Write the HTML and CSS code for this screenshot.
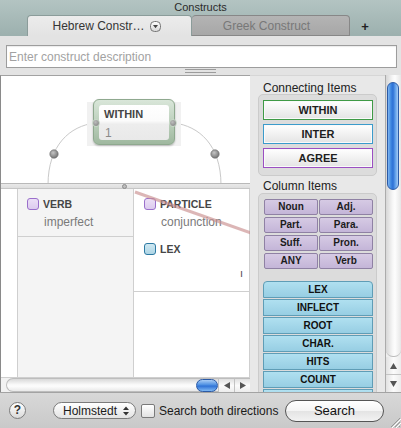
FILE: index.html
```
<!DOCTYPE html>
<html>
<head>
<meta charset="utf-8">
<link rel="stylesheet" href="styles.css">
</head>
<body>
<div class="win">
  <div class="titlebar">
    <div class="title">Constructs</div>
    <div class="tabs">
      <div class="tab tab-active">
        <span>Hebrew Constr…</span>
        <svg class="tabmenu" width="11" height="11" viewBox="0 0 11 11">
          <defs><linearGradient id="tm" x1="0" y1="0" x2="0" y2="1"><stop offset="0" stop-color="#fff"/><stop offset="1" stop-color="#d6d6d6"/></linearGradient></defs>
          <rect x="0.5" y="0.5" width="10" height="10" rx="4" fill="url(#tm)" stroke="#777"/>
          <path d="M3 4h5l-2.5 3.3z" fill="#444"/>
        </svg>
      </div>
      <div class="tab tab-inactive">Greek Construct</div>
      <div class="tab-add">+</div>
    </div>
  </div>

  <div class="toolbar">
    <input class="desc" type="text" placeholder="Enter construct description">
    <div class="grip"></div>
  </div>

  <div class="main">
    <div class="leftpane">
      <div class="canvas">
        <svg class="arcs" width="249" height="107" viewBox="0 0 249 107">
          <defs>
            <radialGradient id="dot" cx="0.4" cy="0.35" r="0.7"><stop offset="0" stop-color="#c4c4c4"/><stop offset="1" stop-color="#6f6f6f"/></radialGradient>
          </defs>
          <path d="M94 47 C69 50 47 69 47 109" fill="none" stroke="#c9c9c9" stroke-width="1"/>
          <path d="M173 47 C198 50 220 69 220 109" fill="none" stroke="#c9c9c9" stroke-width="1"/>
          <circle cx="53" cy="78" r="4.2" fill="url(#dot)" stroke="#6a6a6a" stroke-width="0.6"/>
          <circle cx="214" cy="78" r="4.2" fill="url(#dot)" stroke="#6a6a6a" stroke-width="0.6"/>
        </svg>
        <div class="node-shadow"></div>
        <div class="node">
          <div class="node-inner">
            <div class="node-title">WITHIN</div>
            <div class="node-num">1</div>
          </div>
          <span class="conn conn-l"></span>
          <span class="conn conn-r"></span>
        </div>
      </div>
      <div class="splitter"><span class="knob"></span></div>
      <div class="grid">
        <div class="col gutter"></div>
        <div class="col c1">
          <div class="cell cell-verb">
            <div class="item-head"><span class="chk chk-purple"></span><span class="item-name">VERB</span></div>
            <div class="item-sub">imperfect</div>
          </div>
        </div>
        <div class="col c2">
          <div class="cell cell-particle">
            <div class="item-head"><span class="chk chk-purple"></span><span class="item-name">PARTICLE</span></div>
            <div class="item-sub">conjunction</div>
            <div class="item-head lex"><span class="chk chk-blue"></span><span class="item-name">LEX</span></div>
            <div class="item-value">ו</div>
          </div>
        </div>
        <svg class="link" width="249" height="188" viewBox="0 0 249 188">
          <line x1="134" y1="3" x2="250" y2="44" stroke="#c98f8f" stroke-width="3" stroke-opacity="0.65"/>
        </svg>
      </div>
      <div class="hscroll">
        <div class="htrack"><span class="hthumb"></span></div>
        <div class="harrow"><svg width="6" height="7" viewBox="0 0 6 7"><path d="M6 0v7L0 3.5z" fill="#555"/></svg></div>
        <div class="harrow harrow-r"><svg width="6" height="7" viewBox="0 0 6 7"><path d="M0 0v7l6-3.5z" fill="#555"/></svg></div>
      </div>
    </div>

    <div class="palette">
      <div class="plabel">Connecting Items</div>
      <div class="pbox">
        <div class="cbtn cbtn-green">WITHIN</div>
        <div class="cbtn cbtn-blue">INTER</div>
        <div class="cbtn cbtn-purple">AGREE</div>
      </div>
      <div class="plabel plabel2">Column Items</div>
      <div class="pbox pbox2">
        <div class="pgrid">
          <div class="pbtn">Noun</div><div class="pbtn">Adj.</div>
          <div class="pbtn">Part.</div><div class="pbtn">Para.</div>
          <div class="pbtn">Suff.</div><div class="pbtn">Pron.</div>
          <div class="pbtn">ANY</div><div class="pbtn">Verb</div>
        </div>
        <div class="blist">
          <div class="bbtn bbtn-first">LEX</div>
          <div class="bbtn">INFLECT</div>
          <div class="bbtn">ROOT</div>
          <div class="bbtn">CHAR.</div>
          <div class="bbtn">HITS</div>
          <div class="bbtn">COUNT</div>
          <div class="bbtn">&nbsp;</div>
        </div>
      </div>
    </div>

    <div class="vscroll">
      <div class="vtrack"><span class="vthumb"></span></div>
      <div class="varrow"><svg width="7" height="6" viewBox="0 0 7 6"><path d="M0 6h7L3.5 0z" fill="#555"/></svg></div>
      <div class="varrow varrow-d"><svg width="7" height="6" viewBox="0 0 7 6"><path d="M0 0h7L3.5 6z" fill="#555"/></svg></div>
    </div>
  </div>

  <div class="bottombar">
    <div class="help">?</div>
    <div class="popup"><span>Holmstedt</span>
      <svg width="6" height="10" viewBox="0 0 6 10"><path d="M0 4L3 0.5L6 4z M0 6L3 9.5L6 6z" fill="#333"/></svg>
    </div>
    <span class="checkbox"></span>
    <span class="chklabel">Search both directions</span>
    <div class="search">Search</div>
    <svg class="resize" width="12" height="12" viewBox="0 0 12 12">
      <path d="M11 2L2 11M11 6L6 11M11 10L10 11" stroke="#999" stroke-width="1"/>
      <path d="M12 3L3 12M12 7L7 12" stroke="#fff" stroke-width="1"/>
    </svg>
  </div>
</div>
</body>
</html>
```
FILE: styles.css
```
* { box-sizing: border-box; }
html, body { margin: 0; padding: 0; }
body {
  width: 401px;
  height: 428px;
  overflow: hidden;
  font-family: "Liberation Sans", Arial, sans-serif;
  background: #d0d0d0;
}
.win { width: 401px; height: 428px; display: flex; flex-direction: column; }

/* title + tabs */
.titlebar {
  height: 36px;
  background: linear-gradient(#b3c4c2, #9cb0ae);
  display: flex;
  flex-direction: column;
}
.title { height: 15px; line-height: 15px; text-align: center; font-size: 11px; color: #2b2b2b; }
.tabs { height: 21px; display: flex; padding-left: 27px; }
.tab {
  display: flex; align-items: center; justify-content: center; gap: 5px;
  font-size: 12px; border-radius: 4px 4px 0 0;
}
.tab-active {
  width: 165px;
  background: linear-gradient(#ececec, #e3e3e3);
  color: #353535;
  border: 1px solid #8b9c9a;
  border-bottom: none;
  padding-right: 6px;
}
.tabmenu { display: block; }
.tab-inactive {
  width: 158px;
  background: linear-gradient(#b4b4b4, #a7a7a7);
  color: #787878;
  border: 1px solid #878787;
  border-left: none;
  padding-right: 8px;
}
.tab-add {
  width: 30px; display: flex; align-items: center; justify-content: center;
  font-size: 13px; font-weight: bold; color: #222; padding-top: 1px;
}

/* toolbar */
.toolbar {
  height: 39px;
  background: #e3e3e3;
  padding: 9px 4px 0 6px;
}
.desc {
  display: block;
  width: 391px; height: 23px;
  border: 1px solid #9d9d9d;
  box-shadow: inset 0 1px 1px rgba(0,0,0,0.08);
  padding: 0 2px;
  font-family: "Liberation Sans", Arial, sans-serif;
  font-size: 12px;
  color: #222;
  background: #fff;
  outline: none;
}
.desc::placeholder { color: #a2a2a2; }
.grip {
  width: 31px; height: 4px; margin: 1px 0 0 179px;
  border-top: 1px solid #9c9c9c; border-bottom: 1px solid #9c9c9c;
}

/* main */
.main { height: 317px; display: flex; }
.leftpane {
  width: 250px;
  display: flex; flex-direction: column;
  border-left: 1px solid #8a8a8a;
  border-top: 1px solid #a2a2a2;
  background: #fff;
}
.canvas { height: 107px; position: relative; overflow: hidden; background: #fff; }
.arcs { position: absolute; left: 0; top: 0; }
.node-shadow {
  position: absolute; left: 86px; top: 26px; width: 94px; height: 44px;
  background: #f1f1f1;
}
.node {
  position: absolute; left: 92px; top: 23px; width: 82px; height: 46px;
  border-radius: 6px;
  border: 1px solid #8fa98f;
  background: linear-gradient(#d9e6d9, #b7ccb7 60%, #9fb89f);
  box-shadow: 0 1px 2px rgba(0,0,0,0.25);
}
.node-inner {
  position: absolute; left: 5px; top: 5px; right: 5px; bottom: 4px;
  border-radius: 3px;
  background: linear-gradient(#ffffff, #fbfbfb 45%, #ededed 55%, #e9e9e9);
  padding: 3px 0 0 5px;
}
.node-title { font-size: 11px; font-weight: bold; line-height: 13px; color: #454545; }
.node-num { font-size: 12px; line-height: 14px; color: #8a8a8a; margin-top: 5px; padding-left: 1px; }
.conn {
  position: absolute; top: 19px; width: 8px; height: 8px; border-radius: 50%;
  background: radial-gradient(circle at 40% 35%, #bdbdbd, #7b7b7b);
  border: 1px solid #c9d9c9;
}
.conn-l { left: -2px; }
.conn-r { right: -3px; }

.splitter {
  height: 6px; position: relative;
  background: linear-gradient(#e9e9e9, #dedede);
  border-top: 1px solid #b9b9b9;
  border-bottom: 1px solid #c6c6c6;
}
.knob {
  position: absolute; left: 121px; top: 0px; width: 5px; height: 5px; border-radius: 50%;
  background: #bdbdbd; border: 1px solid #8c8c8c;
}

.grid { height: 188px; display: flex; position: relative; }
.col { height: 100%; border-right: 1px solid #cfcfcf; }
.gutter { width: 17px; background: #fff; }
.c1 { width: 116px; background: #f4f4f4; }
.c2 { width: 116px; background: #fff; }
.cell { border-bottom: 1px solid #cfcfcf; }
.cell-verb { height: 48px; padding: 9px 0 0 9px; }
.cell-particle { height: 103px; padding: 9px 6px 0 10px; }
.item-head { display: flex; align-items: center; gap: 4px; height: 12px; }
.chk { width: 12px; height: 12px; border-radius: 3px; display: block; }
.chk-purple { border: 1px solid #9a6fcb; background: linear-gradient(#ecdff7, #dccbee); }
.chk-blue { border: 1px solid #2d7aa3; background: linear-gradient(#cfe8f2, #aed5e5); }
.item-name { font-size: 10.5px; font-weight: bold; color: #464646; line-height: 12px; }
.item-sub { font-size: 12px; line-height: 14px; color: #7a7a7a; margin-top: 5px; padding-left: 17px; }
.lex { margin-top: 14px; }
.item-value {
  text-align: right; font-family: "DejaVu Sans", sans-serif; font-size: 11px; line-height: 14px;
  color: #555; margin-top: 12px;
}
.link { position: absolute; left: 0; top: 0; pointer-events: none; }

.hscroll { height: 15px; display: flex; background: #f2f2f2; padding-left: 5px; border-top: 1px solid #cfcfcf; }
.htrack {
  flex: 1; display: flex; justify-content: flex-end; align-items: center;
  border-radius: 7px 0 0 7px;
  border: 1px solid #bdbdbd; border-right: none;
  background: linear-gradient(#d9d9d9, #f8f8f8 45%, #fdfdfd 60%, #e9e9e9);
}
.hthumb {
  width: 22px; height: 13px; border-radius: 7px;
  background: linear-gradient(#a9cdf5, #4c8fe2 45%, #2f72d6 55%, #7fb9f3);
  border: 1px solid #2b5aa6;
}
.harrow {
  width: 16px; display: flex; align-items: center; justify-content: center;
  background: linear-gradient(#e0e0e0, #fbfbfb 50%, #ececec);
  border-top: 1px solid #bdbdbd; border-left: 1px solid #c2c2c2;
}

/* palette */
.palette {
  width: 135px;
  background: #e8e8e8;
  padding: 6px 0 0 8px;
  overflow: hidden;
  border-top: 1px solid #d6d6d6;
}
.plabel { font-size: 12px; line-height: 12px; color: #222; padding-left: 5px; }
.plabel2 { margin-top: 4px; line-height: 13px; }
.pbox {
  width: 119px;
  background: #dcdcdc;
  border: 1px solid #cbcbcb;
  border-radius: 5px;
  padding: 5px 3px 7px 4px;
}
.cbtn {
  height: 20px; margin-bottom: 4px;
  font-size: 11px; font-weight: bold; color: #1e1e1e;
  text-align: center; line-height: 18px;
  background: linear-gradient(#ffffff, #f1f1f1 50%, #e4e4e4);
  box-shadow: inset 0 0 0 1px #fafafa;
}
.cbtn:last-child { margin-bottom: 0; }
.cbtn-green { border: 1px solid #3f9a46; }
.cbtn-blue { border: 1px solid #3b9bcb; }
.cbtn-purple { border: 1px solid #9b4fc2; }

.pbox2 { padding-bottom: 0; height: 400px; }
.pgrid {
  display: grid; grid-template-columns: 54px 54px; column-gap: 1px; row-gap: 2px;
  margin-left: 1px;
}
.pbtn {
  height: 16px; line-height: 14px; text-align: center;
  font-size: 10px; font-weight: bold; color: #1c1c1c;
  background: linear-gradient(#d6cae4, #c4b5d8);
  border: 1px solid #8f81a4;
  border-radius: 2px;
}
.blist { margin-top: 12px; width: 110px; }
.bbtn {
  height: 17px; margin-bottom: 1px; line-height: 15px; text-align: center;
  font-size: 10px; font-weight: bold; color: #111;
  background: linear-gradient(#b0e0f0, #97cee3);
  border: 1px solid #5f9db6;
}
.bbtn-first { border-radius: 4px 4px 0 0; }

/* vertical scroller */
.vscroll {
  width: 16px; display: flex; flex-direction: column;
  border-left: 1px solid #ababab;
  background: #eee;
}
.vtrack {
  height: 282px; padding: 7px 0 0 1px;
  border-radius: 0 0 7px 7px;
  background: linear-gradient(90deg, #d6d6d6, #f7f7f7 45%, #fdfdfd 60%, #e6e6e6);
  border-bottom: 1px solid #bcbcbc;
}
.vthumb {
  display: block; width: 12px; height: 108px; border-radius: 6px;
  background: linear-gradient(90deg, #7fb6f2, #3d86e0 30%, #2e70d5 50%, #5a9be8 70%, #a4cbf5);
  border: 1px solid #2b5aa6;
}
.varrow {
  height: 17px; display: flex; align-items: center; justify-content: center;
  background: linear-gradient(90deg, #e2e2e2, #fbfbfb 50%, #ececec);
}
.varrow-d { height: 18px; border-top: 1px solid #c4c4c4; }

/* bottom bar */
.bottombar {
  height: 36px;
  position: relative;
  display: flex; align-items: center;
  padding: 0 17px 0 9px;
  border-top: 1px solid #a3a3a3;
  background: linear-gradient(#d8d8d8, #c9c9c9);
  font-size: 12px; color: #1a1a1a;
}
.help {
  width: 17px; height: 17px; border-radius: 50%;
  border: 1px solid #7c7c7c;
  background: linear-gradient(#ffffff, #dadada);
  font-size: 12px; font-weight: bold; color: #333;
  text-align: center; line-height: 15px;
}
.popup {
  margin-left: 27px;
  width: 83px; height: 17px;
  border-radius: 9px;
  border: 1px solid #7b7b7b;
  background: linear-gradient(#ffffff, #f1f1f1 50%, #e3e3e3);
  display: flex; align-items: center; justify-content: space-between;
  padding: 0 6px 0 9px;
  font-size: 12px;
}
.popup svg { display: block; }
.checkbox {
  margin-left: 5px;
  width: 14px; height: 14px; border-radius: 2px;
  border: 1px solid #7a7a7a;
  background: linear-gradient(#ffffff, #e2e2e2);
}
.chklabel { margin-left: 4px; }
.search {
  margin-left: auto;
  width: 99px; height: 22px; border-radius: 11px;
  border: 1px solid #555;
  background: linear-gradient(#ffffff, #f4f4f4 50%, #e4e4e4 52%, #f2f2f2);
  text-align: center; line-height: 20px; font-size: 13px; color: #111;
}
.resize { position: absolute; right: 0; bottom: 0; }
```
